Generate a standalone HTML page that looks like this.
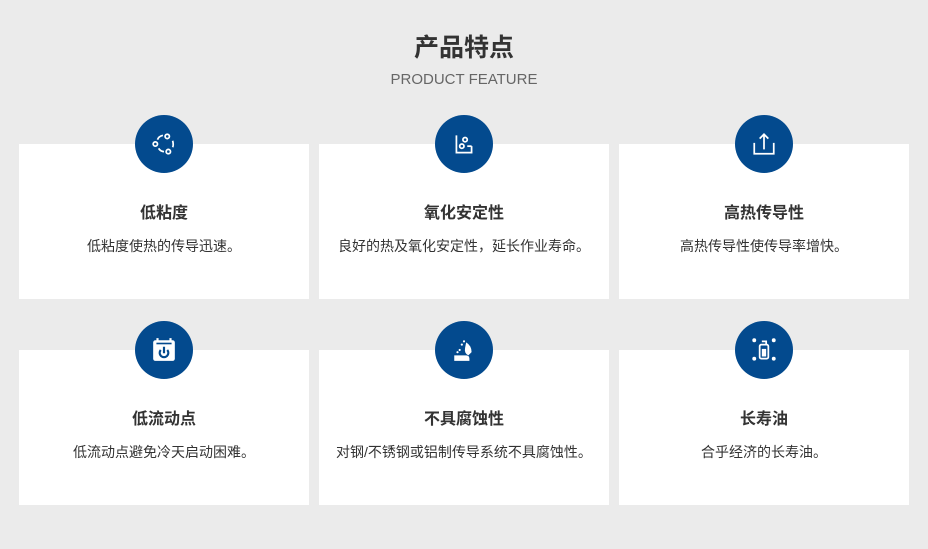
<!DOCTYPE html>
<html><head><meta charset="utf-8"><style>
body{margin:0;width:928px;height:549px;background:#ebebeb;font-family:"Liberation Sans","Noto Sans CJK SC",sans-serif;position:relative;overflow:hidden}
.h{position:absolute;left:0;width:928px;text-align:center}
.card{position:absolute;width:290px;height:155px;background:#fff;text-align:center}
.c{position:absolute;width:58px;height:58px;border-radius:50%;background:#034a8e;left:116px;top:-29px}
.c svg{position:absolute;left:16px;top:16px}
.t{position:absolute;top:55px;width:100%;font-size:16px;font-weight:bold;color:#333}
.d{position:absolute;top:92px;width:100%;font-size:14px;color:#333}
</style></head><body>
<div class="h" style="top:28px;font-size:25px;font-weight:bold;color:#333">产品特点</div>
<div class="h" style="top:71px;font-size:15px;color:#666">PRODUCT FEATURE</div>

<div class="card" style="left:19px;top:144px"><div class="c"><svg width="26" height="26" viewBox="0 0 24 24" fill="none" stroke="#fff" stroke-width="1.6"><circle cx="15" cy="5" r="2"/><circle cx="4" cy="12" r="2"/><circle cx="16" cy="19" r="2"/><path d="M11 4Q7 5 6 8M20 9Q21 13 20 15M7 16Q9 19 12 19"/></svg></div><div class="t">低粘度</div><div class="d">低粘度使热的传导迅速。</div></div>
<div class="card" style="left:319px;top:144px"><div class="c"><svg width="26" height="26" viewBox="0 0 24 24" fill="none" stroke="#fff" stroke-width="1.6"><path d="M5 4V20H19V14"/><circle cx="13" cy="8" r="2"/><circle cx="10" cy="14" r="2"/><path d="M15 14H19"/></svg></div><div class="t">氧化安定性</div><div class="d">良好的热及氧化安定性，延长作业寿命。</div></div>
<div class="card" style="left:619px;top:144px"><div class="c"><svg width="26" height="26" viewBox="0 0 24 24" fill="none" stroke="#fff" stroke-width="1.6"><path d="M3 11V21H21V11M12 17V3M8 7L12 3L16 7"/></svg></div><div class="t">高热传导性</div><div class="d">高热传导性使传导率增快。</div></div>

<div class="card" style="left:19px;top:350px"><div class="c"><svg width="26" height="26" viewBox="0 0 24 24"><rect x="2" y="3" width="20" height="19" rx="2" fill="#fff"/><path d="M6 1V5M18 1V5" stroke="#fff" stroke-width="2"/><path d="M5 6H19" stroke="#034a8e" stroke-width="1.5"/><path d="M9 12A4 4 0 1 0 15 12M12 9V15" fill="none" stroke="#034a8e" stroke-width="2"/></svg></div><div class="t">低流动点</div><div class="d">低流动点避免冷天启动困难。</div></div>
<div class="card" style="left:319px;top:350px"><div class="c"><svg width="26" height="26" viewBox="0 0 24 24" fill="#fff"><path d="M3 17H14Q17 17 17 20V22H3Z"/><path d="M14 5Q19 8 19 14L16 17Q12 15 13 10Z"/><circle cx="12" cy="4" r="1"/><circle cx="10" cy="7" r="1"/><circle cx="8" cy="12" r="1"/><circle cx="6" cy="14" r="1"/></svg></div><div class="t">不具腐蚀性</div><div class="d">对钢/不锈钢或铝制传导系统不具腐蚀性。</div></div>
<div class="card" style="left:619px;top:350px"><div class="c"><svg width="26" height="26" viewBox="0 0 24 24" fill="none" stroke="#fff" stroke-width="1.6"><rect x="8" y="7" width="8" height="13" rx="1.5"/><path d="M10 4H14V7"/><rect x="10" y="11" width="4" height="7" fill="#fff" stroke="none"/><circle cx="3" cy="3" r="1" fill="#fff"/><circle cx="21" cy="3" r="1" fill="#fff"/><circle cx="3" cy="20" r="1" fill="#fff"/><circle cx="21" cy="20" r="1" fill="#fff"/></svg></div><div class="t">长寿油</div><div class="d">合乎经济的长寿油。</div></div>
</body></html>
